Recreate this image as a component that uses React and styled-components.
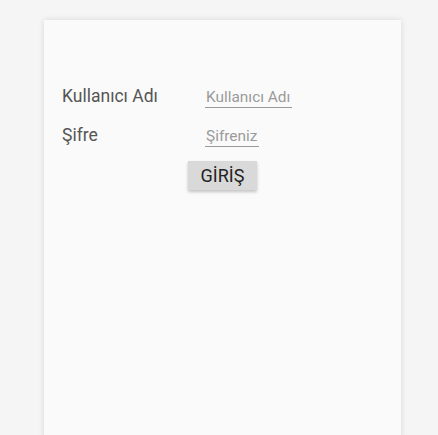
import React from 'react';
import styled, { createGlobalStyle } from 'styled-components';

const Global = createGlobalStyle`
    body {
        margin: 0;
        background: #f5f5f5;
        font-family: Roboto, "Noto Sans", sans-serif;
    }
`

const Card = styled.div`
    margin: 20px 0 0 44px;
    width: 357px;
    min-height: 420px;
    background: #fafafa;
    box-shadow: 0 0 6px rgba(0, 0, 0, 0.12);
    padding: 66px 0 0 18px;
    box-sizing: border-box;
`

const Row = styled.div`
    display: flex;
    align-items: baseline;
    height: 39px;
`

const Label = styled.label`
    width: 143px;
    font-size: 17.5px;
    color: #555;
`

const Input = styled.input`
    width: ${p => p.w}px;
    font-family: inherit;
    font-size: 15.4px;
    color: #333;
    background: transparent;
    border: none;
    border-bottom: 1px solid #999;
    padding: 0 0 1px 1px;
    outline: none;
    &::placeholder {
        color: #9a9a9a;
    }
`

const Actions = styled.div`
    display: flex;
    justify-content: center;
    padding-right: 18px;
    margin-top: -3px;
`

const Button = styled.button`
    font-family: inherit;
    font-size: 18px;
    color: #222;
    background: #d9d9d9;
    border: none;
    width: 69px;
    height: 29px;
    padding: 0;
    box-shadow: 0 2px 3px rgba(0, 0, 0, 0.22);
`

export default function App() {
    return (
        <>
            <Global />
            <Card>
                <Row>
                    <Label>Kullanıcı Adı</Label>
                    <Input w={86} placeholder="Kullanıcı Adı" />
                </Row>
                <Row>
                    <Label>Şifre</Label>
                    <Input w={53} type="password" placeholder="Şifreniz" />
                </Row>
                <Actions>
                    <Button>GİRİŞ</Button>
                </Actions>
            </Card>
        </>
    )
}
